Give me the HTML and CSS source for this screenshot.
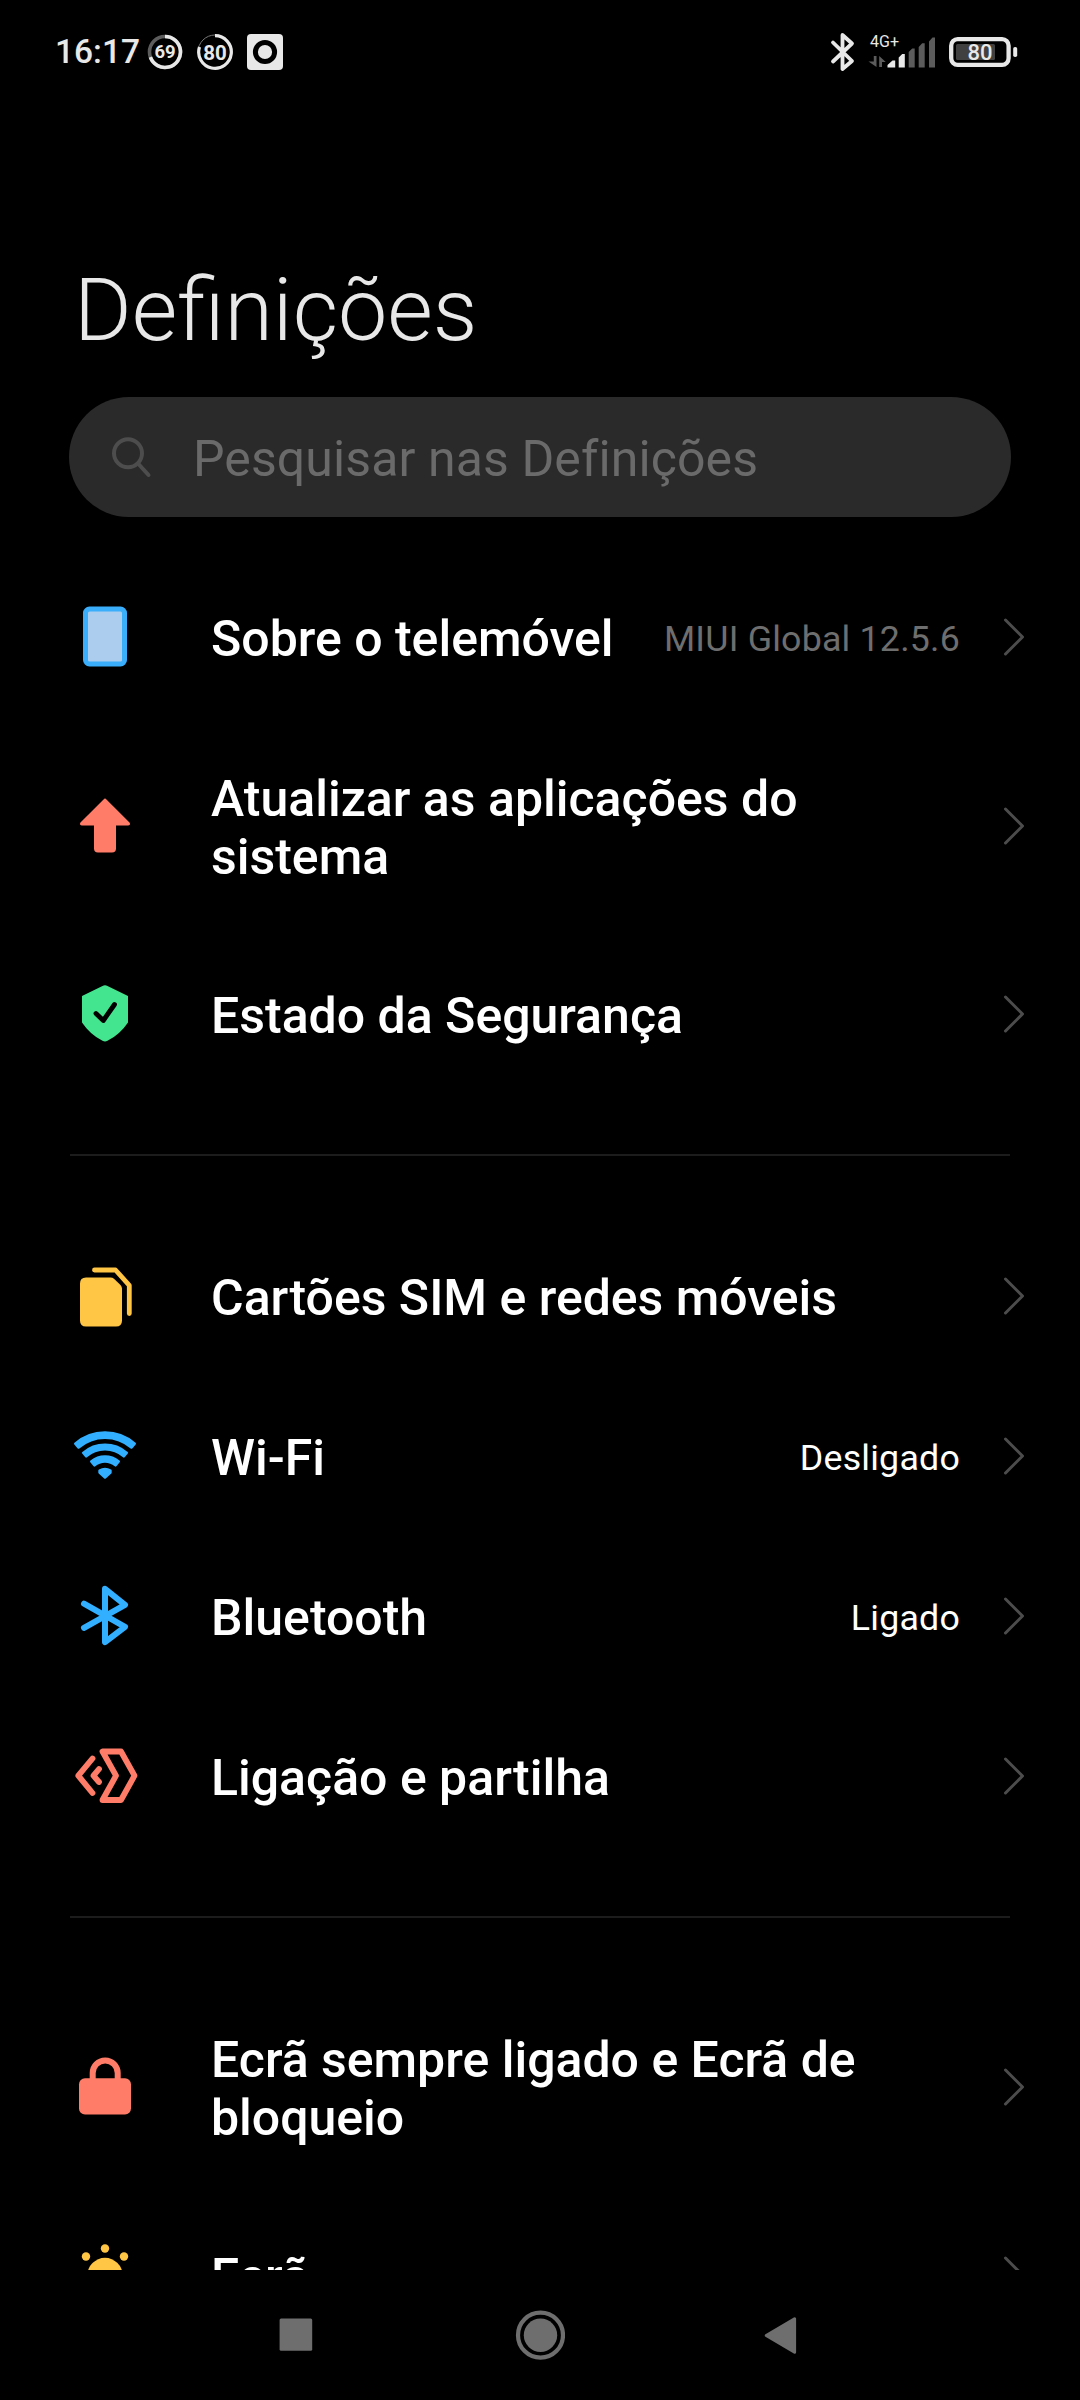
FILE: index.html
```html
<!DOCTYPE html>
<html lang="pt">
<head>
<meta charset="utf-8">
<title>Definições</title>
<link rel="stylesheet" href="styles.css">
</head>
<body>
<svg class="defs" width="0" height="0">
  <symbol id="chevron" viewBox="0 0 24 42"><path d="M3.5 4 20.5 21 3.5 38" fill="none" stroke="#4c4c4c" stroke-width="3" stroke-linecap="round" stroke-linejoin="round"/></symbol>
</svg>
<div class="screen">
  <header class="status">
    <div class="status-left">
      <span class="time">16:17</span>
      <svg class="ring" width="36" height="36" viewBox="0 0 36 36">
        <circle cx="18" cy="18" r="15.500" fill="none" stroke="#5c5c5c" stroke-width="3.600"/>
        <path d="M18 2.500A15.500 15.500 0 1 1 3.400 23.200" fill="none" stroke="#e8e8e8" stroke-width="3.600"/>
        <text x="18" y="24.300" font-size="18.500">69</text>
      </svg>
      <svg class="ring" width="36" height="36" viewBox="0 0 36 36">
        <circle cx="18" cy="18" r="17" fill="none" stroke="#777" stroke-width="1"/>
        <path d="M18 1.700A16.300 16.300 0 1 1 2.500 13" fill="none" stroke="#e8e8e8" stroke-width="3.200"/>
        <text x="18" y="25.500" font-size="20.500">80</text>
      </svg>
      <svg width="36" height="36" viewBox="0 0 36 36">
        <rect width="36" height="36" rx="4" fill="#e8e8e8"/>
        <circle cx="18" cy="18" r="9.600" fill="none" stroke="#000" stroke-width="5"/>
      </svg>
    </div>
    <div class="status-right">
      <svg width="26" height="40" viewBox="0 0 26 40"><path d="M3 10.500 22 29 12.500 37V3L22 11.500 3 29.500" fill="none" stroke="#e8e8e8" stroke-width="3.800" stroke-linecap="round" stroke-linejoin="round"/></svg>
      <svg class="signal" width="68" height="40" viewBox="0 0 68 40">
        <text x="2" y="14.500" font-size="16">4G+</text>
        <path d="M5.800 24h2.700v11L0.500 29.500h5.300zM11.200 35V24l6.500 6h-3.700v5z" fill="#5c5c5c"/>
        <path d="M19.500 35.500v-2.500l5-4.500h2.700v7zM30.700 35.500V25.500l3.500-3.500h2.600v13.500z" fill="#e8e8e8"/>
        <path d="M40.700 35.500V20l3.500-3.500h2.500v19zM50.700 35.500V15l3.500-3.800h2.500v24.300zM61 35.500V9.500l3.500-4h2.500v30z" fill="#5c5c5c"/>
      </svg>
      <svg class="battery" width="69" height="30" viewBox="0 0 69 30">
        <rect x="2.200" y="2.200" width="57.400" height="25.600" rx="6.500" fill="none" stroke="#e8e8e8" stroke-width="4.300"/>
        <rect x="7" y="7" width="39" height="16" rx="1.500" fill="#404040"/>
        <rect x="64.200" y="10" width="4" height="10" rx="1.800" fill="#e8e8e8"/>
        <text x="31" y="23.200" font-size="22">80</text>
      </svg>
    </div>
  </header>

  <main class="content">
    <h1 class="title">Definições</h1>
    <div class="search">
      <svg width="44" height="44" viewBox="0 0 44 44"><circle cx="18" cy="18.200" r="14" fill="none" stroke="#4d4d4d" stroke-width="4"/><path d="M28.500 29 38.500 40" stroke="#4d4d4d" stroke-width="4" stroke-linecap="round"/></svg>
      <span>Pesquisar nas Definições</span>
    </div>

    <section class="group">
      <div class="row">
        <svg class="icon" viewBox="0 0 72 72"><rect x="16.500" y="8" width="39" height="55" rx="4" fill="#accdee" stroke="#3aaefb" stroke-width="5"/></svg>
        <span class="label">Sobre o telemóvel</span>
        <span class="value muted">MIUI Global 12.5.6</span>
        <svg class="chevron"><use href="#chevron"/></svg>
      </div>
      <div class="row tall">
        <svg class="icon" viewBox="0 0 72 72"><path d="M36 9.500 12.200 33.200Q11.500 34.500 13 34.500H26V58.500Q26 61.500 29 61.500H43Q46 61.500 46 58.500V34.500H59Q60.500 34.500 59.800 33.200Z" fill="#ff7d68" stroke="#ff7d68" stroke-width="2" stroke-linejoin="round"/></svg>
        <span class="label">Atualizar as aplicações do sistema</span>
        <svg class="chevron"><use href="#chevron"/></svg>
      </div>
      <div class="row">
        <svg class="icon" viewBox="0 0 72 72"><path d="M33.500 8Q36 6.500 38.500 8L59 18V44.500Q51 56.500 38.500 62.800 36 64.200 33.500 62.800 21 56.500 13 44.500V18Z" fill="#43e58f"/><path d="M27 35.500 34.300 42.500 45.500 26.500" fill="none" stroke="#000" stroke-width="4.800" stroke-linecap="round" stroke-linejoin="round"/></svg>
        <span class="label">Estado da Segurança</span>
        <svg class="chevron"><use href="#chevron"/></svg>
      </div>
    </section>

    <section class="group">
      <div class="row">
        <svg class="icon" viewBox="0 0 72 72"><path d="M17 17.400H41.500Q43.500 17.400 45 18.800L51.500 25Q53 26.500 53 28.500V60.400Q53 66.400 47 66.400H17Q11 66.400 11 60.400V23.400Q11 17.400 17 17.400Z" fill="#ffc545"/><path d="M25.500 10H46.500L60.300 25.400V53.500" fill="none" stroke="#ffc545" stroke-width="4.800" stroke-linecap="round" stroke-linejoin="round"/></svg>
        <span class="label">Cartões SIM e redes móveis</span>
        <svg class="chevron"><use href="#chevron"/></svg>
      </div>
      <div class="row">
        <svg class="icon" viewBox="0 0 72 72"><path d="M6.200 23.700A45.400 45.400 0 0 1 65.800 23.700L62.400 27.600A40.300 40.300 0 0 0 9.600 27.600ZM14.100 32.800A33.400 33.400 0 0 1 57.900 32.800L54.800 36.400A28.600 28.600 0 0 0 17.200 36.400ZM22.200 41.500A21.600 21.600 0 0 1 49.800 41.500L46.500 45.400A16.400 16.400 0 0 0 25.500 45.400ZM30.500 50.500Q36 47.500 41.500 50.500L41.500 52.500 36 57.500 30.500 52.500Z" fill="#32afff" stroke="#32afff" stroke-width="2.400" stroke-linejoin="round"/></svg>
        <span class="label">Wi-Fi</span>
        <span class="value">Desligado</span>
        <svg class="chevron"><use href="#chevron"/></svg>
      </div>
      <div class="row">
        <svg class="icon" viewBox="0 0 72 72"><path d="M15 23.700 56 46.800 36 62.200V8.800L56 24.800 15 47.900" fill="none" stroke="#32afff" stroke-width="6" stroke-linecap="round" stroke-linejoin="round"/></svg>
        <span class="label">Bluetooth</span>
        <span class="value">Ligado</span>
        <svg class="chevron"><use href="#chevron"/></svg>
      </div>
      <div class="row">
        <svg class="icon" viewBox="0 0 72 72"><g fill="none" stroke="#ff7d68" stroke-width="5.800" stroke-linecap="round" stroke-linejoin="round"><path d="M33.500 11.500H52L65.500 35.700 52 60H33.500L47 35.700Z"/><path d="M23.500 18.500 9.300 35.700 23.500 53"/><path d="M30 29 24.500 35.700 30 42"/></g></svg>
        <span class="label">Ligação e partilha</span>
        <svg class="chevron"><use href="#chevron"/></svg>
      </div>
    </section>

    <section class="group">
      <div class="row tall">
        <svg class="icon" viewBox="0 0 72 72"><rect x="10" y="27.200" width="52" height="36.300" rx="6" fill="#ff7d68"/><path d="M23.700 30V22A12.500 12.500 0 0 1 48.700 22V30" fill="none" stroke="#ff7d68" stroke-width="6"/></svg>
        <span class="label">Ecrã sempre ligado e Ecrã de bloqueio</span>
        <svg class="chevron"><use href="#chevron"/></svg>
      </div>
      <div class="row">
        <svg class="icon" viewBox="0 0 72 72"><g fill="#ffc545"><circle cx="36" cy="36.500" r="17.700"/><circle cx="36" cy="9.500" r="4.200"/><circle cx="17" cy="17.500" r="4.200"/><circle cx="55" cy="17.500" r="4.200"/></g></svg>
        <span class="label">Ecrã</span>
        <svg class="chevron"><use href="#chevron"/></svg>
      </div>
    </section>
  </main>

  <nav class="navbar">
    <svg width="50" height="50" viewBox="0 0 50 50"><rect x="4.600" y="8.500" width="32.600" height="32.300" rx="1.500"/></svg>
    <svg width="50" height="50" viewBox="0 0 50 50"><circle cx="25.500" cy="25.200" r="22.500" fill="none" stroke="#6e6e6e" stroke-width="4.200"/><circle cx="25.500" cy="25.200" r="16.700"/></svg>
    <svg width="50" height="50" viewBox="0 0 50 50"><path d="M11.200 25.500 39.600 8.800V42.300Z" stroke="#6e6e6e" stroke-width="3" stroke-linejoin="round"/></svg>
  </nav>
</div>
</body>
</html>
```
FILE: styles.css
```css
* { box-sizing: border-box; }

body {
  margin: 0;
  background: #000;
  color: #fff;
  font-family: Roboto, "Noto Sans", sans-serif;
}

svg { display: block; flex: none; }
.defs { position: absolute; }

.screen {
  display: flex;
  flex-direction: column;
  width: 1080px;
  height: 2400px;
  overflow: hidden;
}

.status {
  display: flex;
  justify-content: space-between;
  flex: none;
  height: 104px;
  padding: 0 62px 0 55px;
  align-items: center;
}
.status-left, .status-right { display: flex; align-items: center; }
.status-left { gap: 14px; }
.status svg text { fill: #e8e8e8; font-weight: 700; text-anchor: middle; }
.status .signal text { font-weight: 400; text-anchor: start; }
.status .battery text { font-weight: 500; }
.time {
  width: 78px;
  color: #e8e8e8;
  font-size: 33.5px;
  font-weight: 500;
  line-height: 40px;
  white-space: nowrap;
}
.signal { margin-left: 12px; }
.battery { margin-left: 13px; }

.content {
  flex: none;
  height: 2166px;
  overflow: hidden;
}

.title {
  margin: 154px 0 0 74px;
  color: #e8e8e8;
  font-size: 88px;
  font-weight: 300;
  line-height: 104px;
}

.search {
  display: flex;
  align-items: center;
  gap: 39px;
  height: 120px;
  margin: 35px 69px 40px;
  padding-left: 41px;
  border-radius: 60px;
  background: #2a2a2a;
  color: #6a6a6a;
  font-size: 50px;
  letter-spacing: 0.1px;
}
.search span { padding-top: 3px; }

.group + .group {
  margin: 60px 70px 0;
  padding-top: 60px;
  border-top: 2px solid #1c1c1c;
}
.group + .group .row { margin: 0 -70px; }

.row {
  display: flex;
  align-items: center;
  height: 160px;
  padding: 0 54px 0 69px;
}
.row.tall { height: 217px; }
.icon { width: 72px; height: 72px; margin-right: 70px; }
.label {
  flex: 1;
  padding-top: 3px;
  font-size: 50px;
  font-weight: 500;
  line-height: 58px;
}
.tall .label { padding: 5px 70px 0 0; }
.value {
  padding-top: 3px;
  font-size: 35.75px;
  line-height: 42px;
  letter-spacing: 0.2px;
}
.muted { color: #6e6e6e; }
.chevron { width: 24px; height: 42px; margin-left: 42px; }

.navbar {
  display: flex;
  flex: none;
  justify-content: center;
  gap: 190px;
  align-items: center;
  height: 130px;
}
.navbar svg { fill: #6e6e6e; }
```
